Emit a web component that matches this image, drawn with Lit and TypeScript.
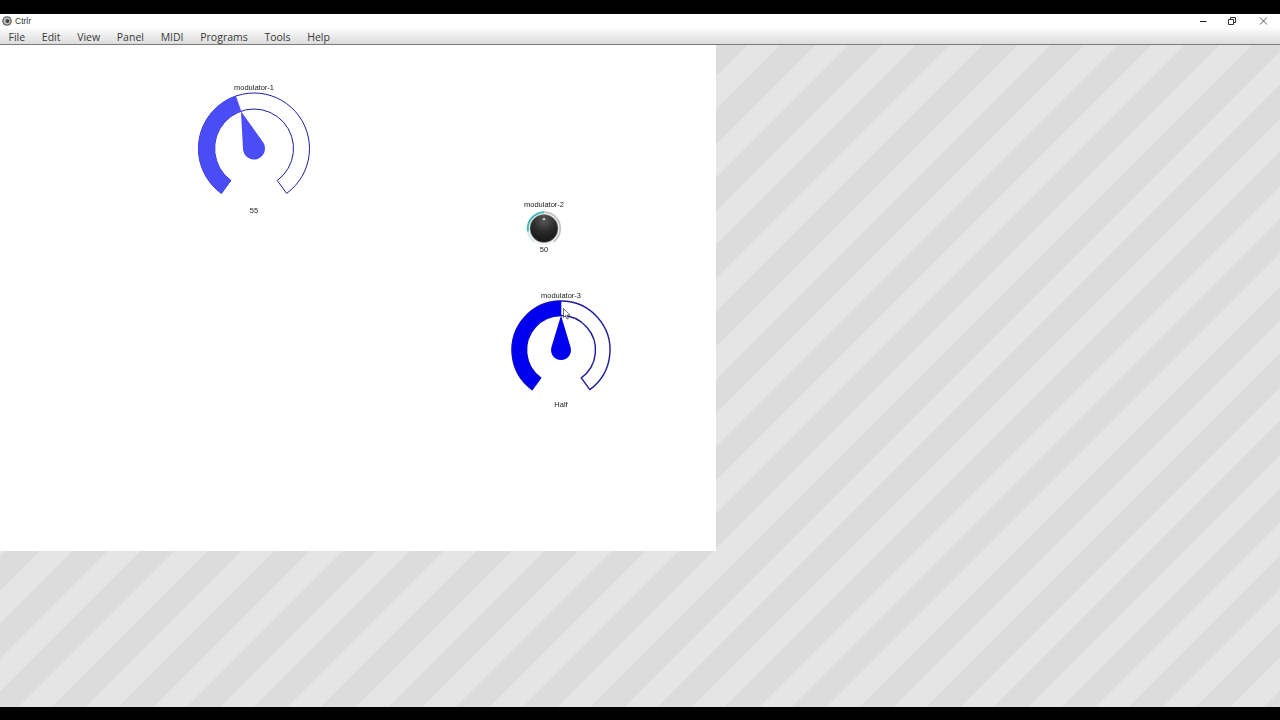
import { LitElement, html, css, svg } from "lit";
import { customElement, property } from "lit/decorators.js";

const pt = (cx: number, cy: number, r: number, deg: number) => {
  const a = (deg * Math.PI) / 180;
  return [cx + r * Math.sin(a), cy - r * Math.cos(a)];
};
const ring = (cx: number, cy: number, ro: number, ri: number, a0: number, a1: number) => {
  const large = a1 - a0 > 180 ? 1 : 0;
  const [x0, y0] = pt(cx, cy, ro, a0);
  const [x1, y1] = pt(cx, cy, ro, a1);
  const [x2, y2] = pt(cx, cy, ri, a1);
  const [x3, y3] = pt(cx, cy, ri, a0);
  return `M${x0} ${y0}A${ro} ${ro} 0 ${large} 1 ${x1} ${y1}L${x2} ${y2}A${ri} ${ri} 0 ${large} 0 ${x3} ${y3}Z`;
};

@customElement("gauge-knob")
class GaugeKnob extends LitElement {
  static styles = css`
    :host { display: block; }
    svg { display: block; overflow: visible; }
  `;
  @property({ type: Number }) w = 100;
  @property({ type: Number }) h = 100;
  @property({ type: Number }) ro = 50;
  @property({ type: Number }) ri = 35;
  @property({ type: Number }) hub = 10;
  @property({ type: Number }) frac = 0.5;
  @property({ type: Number }) sw = 1;
  @property() fill = "#0000f0";

  render() {
    const cx = this.w / 2, cy = this.ro;
    const a = -144 + 288 * this.frac;
    const [tx, ty] = pt(cx, cy, this.ri, a);
    const [l1, l2] = pt(cx, cy, this.hub, a - 72);
    const [r1, r2] = pt(cx, cy, this.hub, a + 72);
    return html`<svg width=${this.w} height=${this.h} viewBox="0 0 ${this.w} ${this.h}">
      <path d=${ring(cx, cy, this.ro, this.ri, -144, 144)} fill="#fff" stroke="#1c1c9c" stroke-width=${this.sw}></path>
      <path d=${ring(cx, cy, this.ro, this.ri, -144, a)} fill=${this.fill} stroke=${this.fill} stroke-width="0.6"></path>
      ${svg`<path d="M${tx} ${ty}L${r1} ${r2}A${this.hub} ${this.hub} 0 1 1 ${l1} ${l2}Z" fill=${this.fill}></path>`}
    </svg>`;
  }
}

@customElement("image-knob")
class ImageKnob extends LitElement {
  static styles = css`
    :host { display: block; }
    svg { display: block; overflow: visible; }
  `;
  render() {
    return html`<svg width="38" height="35" viewBox="0 0 38 35">
      <defs>
        <radialGradient id="cap" cx="0.5" cy="0.2" r="0.85">
          <stop offset="0" stop-color="#585858"></stop>
          <stop offset="0.5" stop-color="#2a2a2a"></stop>
          <stop offset="1" stop-color="#141414"></stop>
        </radialGradient>
      </defs>
      <circle cx="19" cy="18.5" r="17" fill="#f4f4f4"></circle>
      <path d=${ring(19, 18.5, 17.2, 15.4, 0, 144)} fill="#c4c4c4"></path>
      <path d=${ring(19, 18.5, 17.2, 15.4, -144, -100)} fill="#cfe9e8"></path>
      <path d=${ring(19, 18.5, 17.2, 15.2, -100, 0)} fill="#3fb9b6"></path>
      <circle cx="19" cy="18.5" r="14" fill="url(#cap)" stroke="#909090" stroke-width="0.6"></circle>
      <path d="M17.4 10 19 7.5 20.6 10Z" fill="#e4e4e4"></path>
    </svg>`;
  }
}

const MENU = ["File", "Edit", "View", "Panel", "MIDI", "Programs", "Tools", "Help"];

const MODS = [
  { kind: "gauge", name: "modulator-1", value: "55", left: 197.5, top: 37.5, w: 112, h: 113, ro: 55.5, ri: 39.5, hub: 11, frac: 55 / 127, fill: "#4a4cf6", sw: 1 },
  { kind: "image", name: "modulator-2", value: "50", left: 523.5, top: 154.5 },
  { kind: "gauge", name: "modulator-3", value: "Half", left: 511, top: 245.5, w: 100, h: 99, ro: 49, ri: 34.5, hub: 10, frac: 0.5, fill: "#0000ee", sw: 1.4 },
];

@customElement("app-root")
class AppRoot extends LitElement {
  static styles = css`
    :host {
      display: flex;
      flex-direction: column;
      width: 1280px;
      height: 720px;
      overflow: hidden;
      font-family: "Open Sans", "Liberation Sans", sans-serif;
      color: #222;
      background: #000;
    }
    .letterbox-top { height: 14px; flex: none; background: #000; }
    .letterbox-bottom { height: 13px; flex: none; background: #000; }
    .title {
      height: 14px; flex: none; background: #fff;
      display: flex; align-items: center; padding: 0 2px; gap: 3px;
      color: #333;
    }
    .logo { display: block; flex: none; }
    .title-text { flex: 1; font-family: "Liberation Sans", sans-serif; font-size: 8.5px; }
    .win { display: flex; align-items: center; }
    .win svg { display: block; width: 30px; height: 12px; }
    .menu {
      height: 17px; flex: none; box-sizing: border-box;
      display: flex; align-items: center;
      padding: 2px 0 0 8.5px;
      background: linear-gradient(#fcfcfc, #dcdcdc);
      border-bottom: 1px solid #7c7c7c;
      font-size: 10.5px; color: #3a3a3a;
    }
    .menu span { display: block; }
    .menu span + span { margin-left: 16.7px; }
    .main {
      flex: 1; min-height: 0;
      background: repeating-linear-gradient(135deg,
        #dcdcdc 0 5.2px, #e5e5e5 5.2px 28.5px, #dcdcdc 28.5px 47.6px);
    }
    .panel { position: relative; width: 715.5px; height: 506px; background: #fff; }
    .mod {
      position: absolute; display: flex; flex-direction: column; align-items: center;
      font-family: "Liberation Sans", sans-serif; font-size: 7.5px; line-height: 10px; color: #222;
      will-change: transform;
    }
    .cursor { position: absolute; left: 562.5px; top: 263px; display: block; }
  `;

  render() {
    return html`
      <div class="letterbox-top"></div>
      <div class="title">
        <svg class="logo" width="10" height="10" viewBox="0 0 10 10">
          <circle cx="5" cy="5" r="4.8" fill="#666"></circle>
          <circle cx="5" cy="5" r="3.4" fill="#c4c4c4"></circle>
          <circle cx="5.4" cy="5" r="2" fill="#444"></circle>
        </svg>
        <span class="title-text">Ctrlr</span>
        <div class="win">
          <svg viewBox="0 0 30 12"><path d="M12 6.5h6.5" stroke="#222" stroke-width="1"></path></svg>
          <svg viewBox="0 0 30 12"><path d="M10.5 4.5h5v5h-5zM12.5 4.5v-2h5v5h-2" fill="none" stroke="#333" stroke-width="1"></path></svg>
          <svg viewBox="0 0 30 12"><path d="M12 2.5l7 7M19 2.5l-7 7" stroke="#444" stroke-width="0.9"></path></svg>
        </div>
      </div>
      <div class="menu">${MENU.map((m) => html`<span>${m}</span>`)}</div>
      <div class="main">
        <div class="panel">
          ${MODS.map((m) => html`
            <div class="mod" style="left:${m.left}px;top:${m.top}px">
              <div>${m.name}</div>
              ${m.kind === "gauge"
                ? html`<gauge-knob .w=${m.w} .h=${m.h} .ro=${m.ro} .ri=${m.ri} .hub=${m.hub} .frac=${m.frac} .fill=${m.fill} .sw=${m.sw}></gauge-knob>`
                : html`<image-knob></image-knob>`}
              <div>${m.value}</div>
            </div>`)}
          <svg class="cursor" width="8" height="12" viewBox="0 0 8 12">
            <path d="M0.5 0.5V9.5L2.6 7.6 4 11 5.4 10.4 4 7.2H7Z" fill="#fff" stroke="#333" stroke-width="0.7"></path>
          </svg>
        </div>
      </div>
      <div class="letterbox-bottom"></div>
    `;
  }
}
